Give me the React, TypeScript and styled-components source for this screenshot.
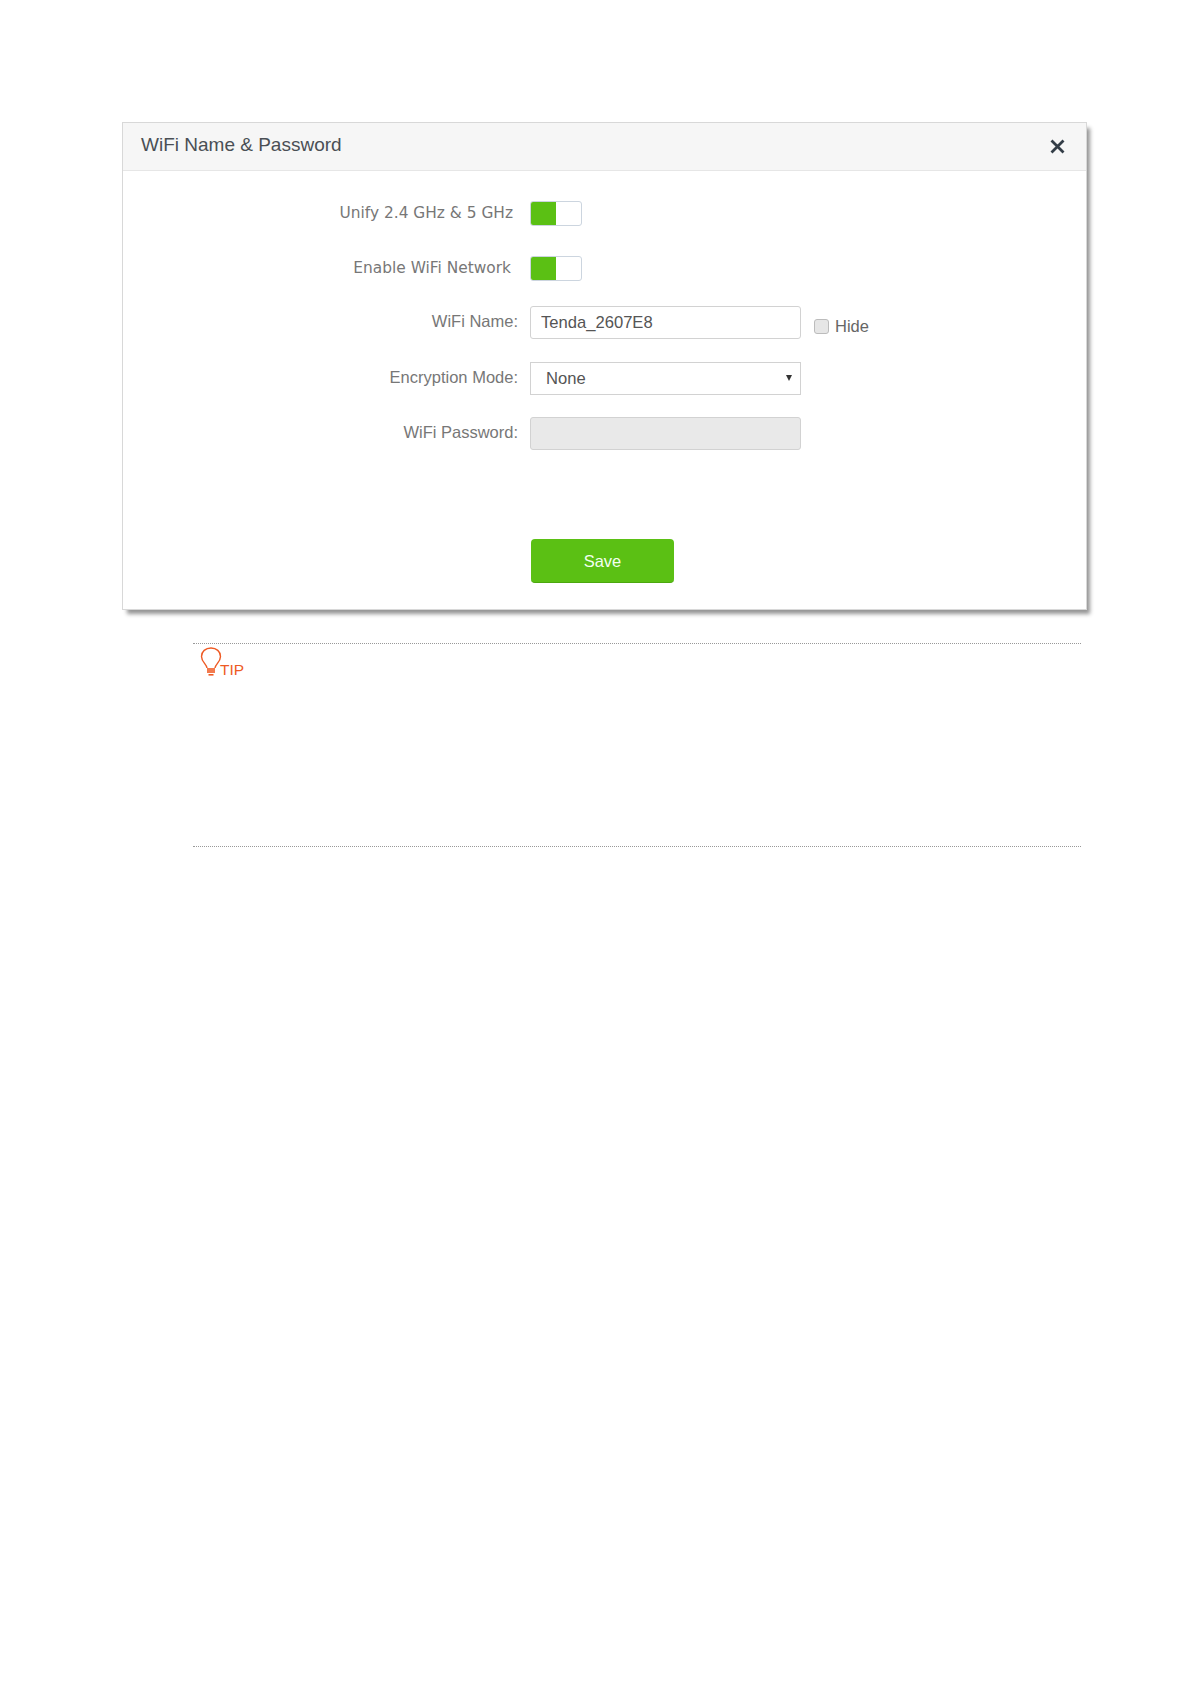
import React, { FC } from 'react';
import styled, { createGlobalStyle } from 'styled-components';

const GlobalStyle = createGlobalStyle`
  html, body {
    margin: 0;
    padding: 0;
    background: #fff;
    font-family: "Liberation Sans", Arial, sans-serif;
  }
`;

type RowProps = {
  $top: number;
};

type LabelProps = {
  $wide?: boolean;
  $pad: number;
};

const Switch: FC = () => (
  <SwitchBox>
    <SwitchOn />
  </SwitchBox>
);

const TipBulb: FC = () => (
  <svg width="22" height="31" viewBox="0 0 22 31" fill="none">
    <path
      d="M7 21 C6.5 17 1.5 15 1.5 9.5 C1.5 4.5 5.5 1 11 1 C16.5 1 20.5 4.5 20.5 9.5 C20.5 15 15.5 17 15 21"
      stroke="#ee5a24"
      strokeWidth="1.4"
    />
    <rect x="7" y="21" width="8" height="5" fill="#f27a4e" />
    <rect x="8.5" y="27" width="5" height="1.6" fill="#ee5a24" />
  </svg>
);

const App: FC = () => {
  return (
    <Page>
      <GlobalStyle />
      <Dialog>
        <Header>
          <Title>WiFi Name &amp; Password</Title>
          <svg width="15" height="15" viewBox="0 0 15 15" fill="none">
            <path d="M1.5 1.5 L13.5 13.5 M13.5 1.5 L1.5 13.5" stroke="#333d47" strokeWidth="2.8" />
          </svg>
        </Header>
        <Form>
          <Row $top={0}>
            <Label $wide $pad={17}>Unify 2.4 GHz &amp; 5 GHz</Label>
            <Switch />
          </Row>
          <Row $top={30}>
            <Label $wide $pad={19}>Enable WiFi Network</Label>
            <Switch />
          </Row>
          <Row $top={25}>
            <Label $pad={12}>WiFi Name:</Label>
            <TextInput value="Tenda_2607E8" readOnly />
            <HideOption>
              <HideCheck type="checkbox" />
              Hide
            </HideOption>
          </Row>
          <Row $top={23}>
            <Label $pad={12}>Encryption Mode:</Label>
            <SelectWrap>
              <Select defaultValue="None">
                <option>None</option>
              </Select>
              <Caret />
            </SelectWrap>
          </Row>
          <Row $top={22}>
            <Label $pad={12}>WiFi Password:</Label>
            <TextInput disabled />
          </Row>
          <SaveButton>Save</SaveButton>
        </Form>
      </Dialog>
      <Tip>
        <TipMark>
          <TipBulb />
          <TipText>TIP</TipText>
        </TipMark>
      </Tip>
    </Page>
  );
};

const Page = styled.div`
  width: 1191px;
  height: 1684px;
  padding: 122px 0 0 122px;
  box-sizing: border-box;
`;

const Dialog = styled.section`
  width: 965px;
  height: 488px;
  box-sizing: border-box;
  border: 1px solid #d8d8d8;
  background: #fff;
  box-shadow: 4px 5px 4px -1px rgba(0, 0, 0, 0.42);
`;

const Header = styled.header`
  height: 48px;
  box-sizing: border-box;
  background: #f6f6f6;
  border-bottom: 1px solid #e6e6e6;
  display: flex;
  align-items: center;
  justify-content: space-between;
  padding: 0 21px 0 18px;
`;

const Title = styled.h2`
  margin: 0 0 3px;
  font-size: 19px;
  font-weight: 400;
  color: #4a4f55;
`;

const Form = styled.div`
  display: flex;
  flex-direction: column;
  padding: 30px 0 0 407px;
`;

const Row = styled.div<RowProps>`
  display: flex;
  align-items: center;
  margin-top: ${({ $top }) => $top}px;
`;

const Label = styled.label<LabelProps>`
  width: 400px;
  margin-left: -400px;
  flex: none;
  box-sizing: border-box;
  text-align: right;
  white-space: nowrap;
  color: #777;
  padding-right: ${({ $pad }) => $pad}px;
  margin-top: -2px;
  font-family: ${({ $wide }) => ($wide ? '"DejaVu Sans", sans-serif' : '"Liberation Sans", sans-serif')};
  font-size: ${({ $wide }) => ($wide ? 15.4 : 16.5)}px;
`;

const SwitchBox = styled.div`
  width: 52px;
  height: 25px;
  box-sizing: border-box;
  border: 1px solid #ccd5df;
  border-radius: 3px;
  background: #fff;
  overflow: hidden;
`;

const SwitchOn = styled.div`
  width: 25px;
  height: 100%;
  background: #5bc014;
`;

const fieldStyle = `
  width: 271px;
  height: 33px;
  box-sizing: border-box;
  border: 1px solid #d2d2d2;
  font-family: "Liberation Sans", sans-serif;
  font-size: 16.6px;
  color: #555;
  outline: none;
`;

const TextInput = styled.input`
  ${fieldStyle}
  border-radius: 3px;
  padding: 0 10px;
  background: #fff;

  &:disabled {
    background: #e9e9e9;
  }
`;

const HideOption = styled.label`
  display: flex;
  align-items: center;
  gap: 6px;
  margin: 7px 0 0 13px;
  color: #666;
  font-size: 16.5px;
`;

const HideCheck = styled.input`
  appearance: none;
  width: 15px;
  height: 15px;
  margin: 0;
  border: 1px solid #bcbcbc;
  border-radius: 3px;
  background: #e6e6e6;
`;

const SelectWrap = styled.div`
  position: relative;
  width: 271px;
  height: 33px;
`;

const Select = styled.select`
  ${fieldStyle}
  appearance: none;
  border-radius: 0;
  padding: 0 15px;
  background: #fff;
`;

const Caret = styled.span`
  position: absolute;
  right: 9px;
  top: 13px;
  width: 0;
  height: 0;
  border-left: 3.5px solid transparent;
  border-right: 3.5px solid transparent;
  border-top: 6px solid #333;
`;

const SaveButton = styled.button`
  width: 143px;
  height: 44px;
  margin: 89px 0 0 1px;
  padding: 2px 0 0;
  border: 0;
  border-bottom: 1px solid #4ca80f;
  border-radius: 4px;
  background: #5bc014;
  color: #f2fff0;
  font-family: "Liberation Sans", sans-serif;
  font-size: 16.5px;
`;

const Tip = styled.aside`
  width: 888px;
  height: 204px;
  box-sizing: border-box;
  margin: 33px 0 0 71px;
  border-top: 1px dotted #999;
  border-bottom: 1px dotted #999;
`;

const TipMark = styled.div`
  display: flex;
  align-items: flex-end;
  padding: 3px 0 0 7px;
`;

const TipText = styled.span`
  margin: 0 0 0 -2px;
  color: #ee5a24;
  font-size: 15.5px;
  line-height: 17px;
`;

export default App;
